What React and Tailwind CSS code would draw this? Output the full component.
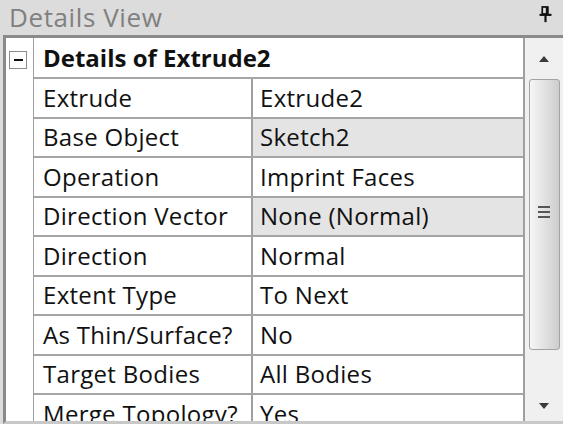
import React from 'react';

const rows = [
  { label: 'Extrude', value: 'Extrude2' },
  { label: 'Base Object', value: 'Sketch2', shaded: true },
  { label: 'Operation', value: 'Imprint Faces' },
  { label: 'Direction Vector', value: 'None (Normal)', shaded: true },
  { label: 'Direction', value: 'Normal' },
  { label: 'Extent Type', value: 'To Next' },
  { label: 'As Thin/Surface?', value: 'No' },
  { label: 'Target Bodies', value: 'All Bodies' },
  { label: 'Merge Topology?', value: 'Yes' },
];

const PinIcon = () => (
  <svg width="13" height="18" viewBox="0 0 12 16" fill="none" stroke="#111" strokeWidth="1.6">
    <rect x="3" y="1.5" width="5" height="6.5" />
    <line x1="7.5" y1="1.5" x2="7.5" y2="8" strokeWidth="2.4" />
    <line x1="0.5" y1="8.8" x2="11.5" y2="8.8" strokeWidth="2" />
    <line x1="6" y1="9" x2="6" y2="15.5" strokeWidth="2" />
  </svg>
);

const Arrow = ({ down }) => (
  <svg width="10" height="6" viewBox="0 0 10 6">
    <polygon points={down ? '0,0 10,0 5,6' : '0,6 10,6 5,0'} fill="#3a3a3a" />
  </svg>
);

const App = () => {
  return (
    <div
      className="w-[563px] h-[424px] overflow-hidden bg-[#dcdcdc] flex flex-col"
      style={{ fontFamily: '"Open Sans", "Noto Sans", sans-serif' }}
    >
      {/* title bar */}
      <div className="h-[35px] flex items-start justify-between pl-[9px] pr-[11px] pt-[3px] shrink-0">
        <span className="text-[26px] tracking-[0.6px] text-[#808080] leading-[28px]">Details View</span>
        <div className="mt-[2px]">
          <PinIcon />
        </div>
      </div>

      {/* panel */}
      <div className="flex-1 min-h-0 ml-[3px] border-t-[3px] border-t-[#8a8a8a] border-l-[3px] border-l-[#8a8a8a] border-b-[3px] border-b-[#c8c8c8] bg-white flex text-[24px] tracking-[0.3px] text-[#111] leading-none">
        {/* tree gutter */}
        <div className="w-[28px] shrink-0 border-r border-[#a0a0a0] pt-[13px] pl-[3px]">
          <div className="w-[18px] h-[18px] border border-[#8c8c8c] flex items-center justify-center">
            <div className="w-[9px] h-[2px] bg-[#111]" />
          </div>
        </div>

        {/* grid */}
        <div className="w-[491px] shrink-0 border-r-2 border-[#a0a0a0] overflow-hidden">
          <div className="h-[41px] border-b-2 border-[#a5a5a5] flex items-center pl-[9px] font-bold tracking-normal">
            Details of Extrude2
          </div>
          {rows.map((r) => (
            <div key={r.label} className="h-[39.5px] border-b-2 border-[#a5a5a5] flex shrink-0">
              <div className="w-[219px] shrink-0 border-r-2 border-[#a0a0a0] flex items-center pl-[9px]">
                {r.label}
              </div>
              <div className={`flex-1 flex items-center pl-[7px] ${r.shaded ? 'bg-[#e4e4e4]' : 'bg-white'}`}>
                {r.value}
              </div>
            </div>
          ))}
        </div>

        {/* scrollbar */}
        <div className="flex-1 bg-[#f0f0f0] flex flex-col items-center">
          <div className="h-[41px] flex items-center justify-center">
            <Arrow />
          </div>
          <div className="w-[31px] h-[271px] rounded-[3px] border border-[#a3a3a3] bg-gradient-to-r from-[#f6f6f6] via-[#e2e2e2] to-[#cdcdcd] flex items-center justify-center">
            <div className="flex flex-col gap-[3px] mb-[6px]">
              <div className="w-[12px] h-[2px] bg-[#555]" />
              <div className="w-[12px] h-[2px] bg-[#555]" />
              <div className="w-[12px] h-[2px] bg-[#555]" />
            </div>
          </div>
          <div className="flex-1 flex items-end justify-center pb-[12px]">
            <Arrow down />
          </div>
        </div>
      </div>
    </div>
  );
};

export default App;
